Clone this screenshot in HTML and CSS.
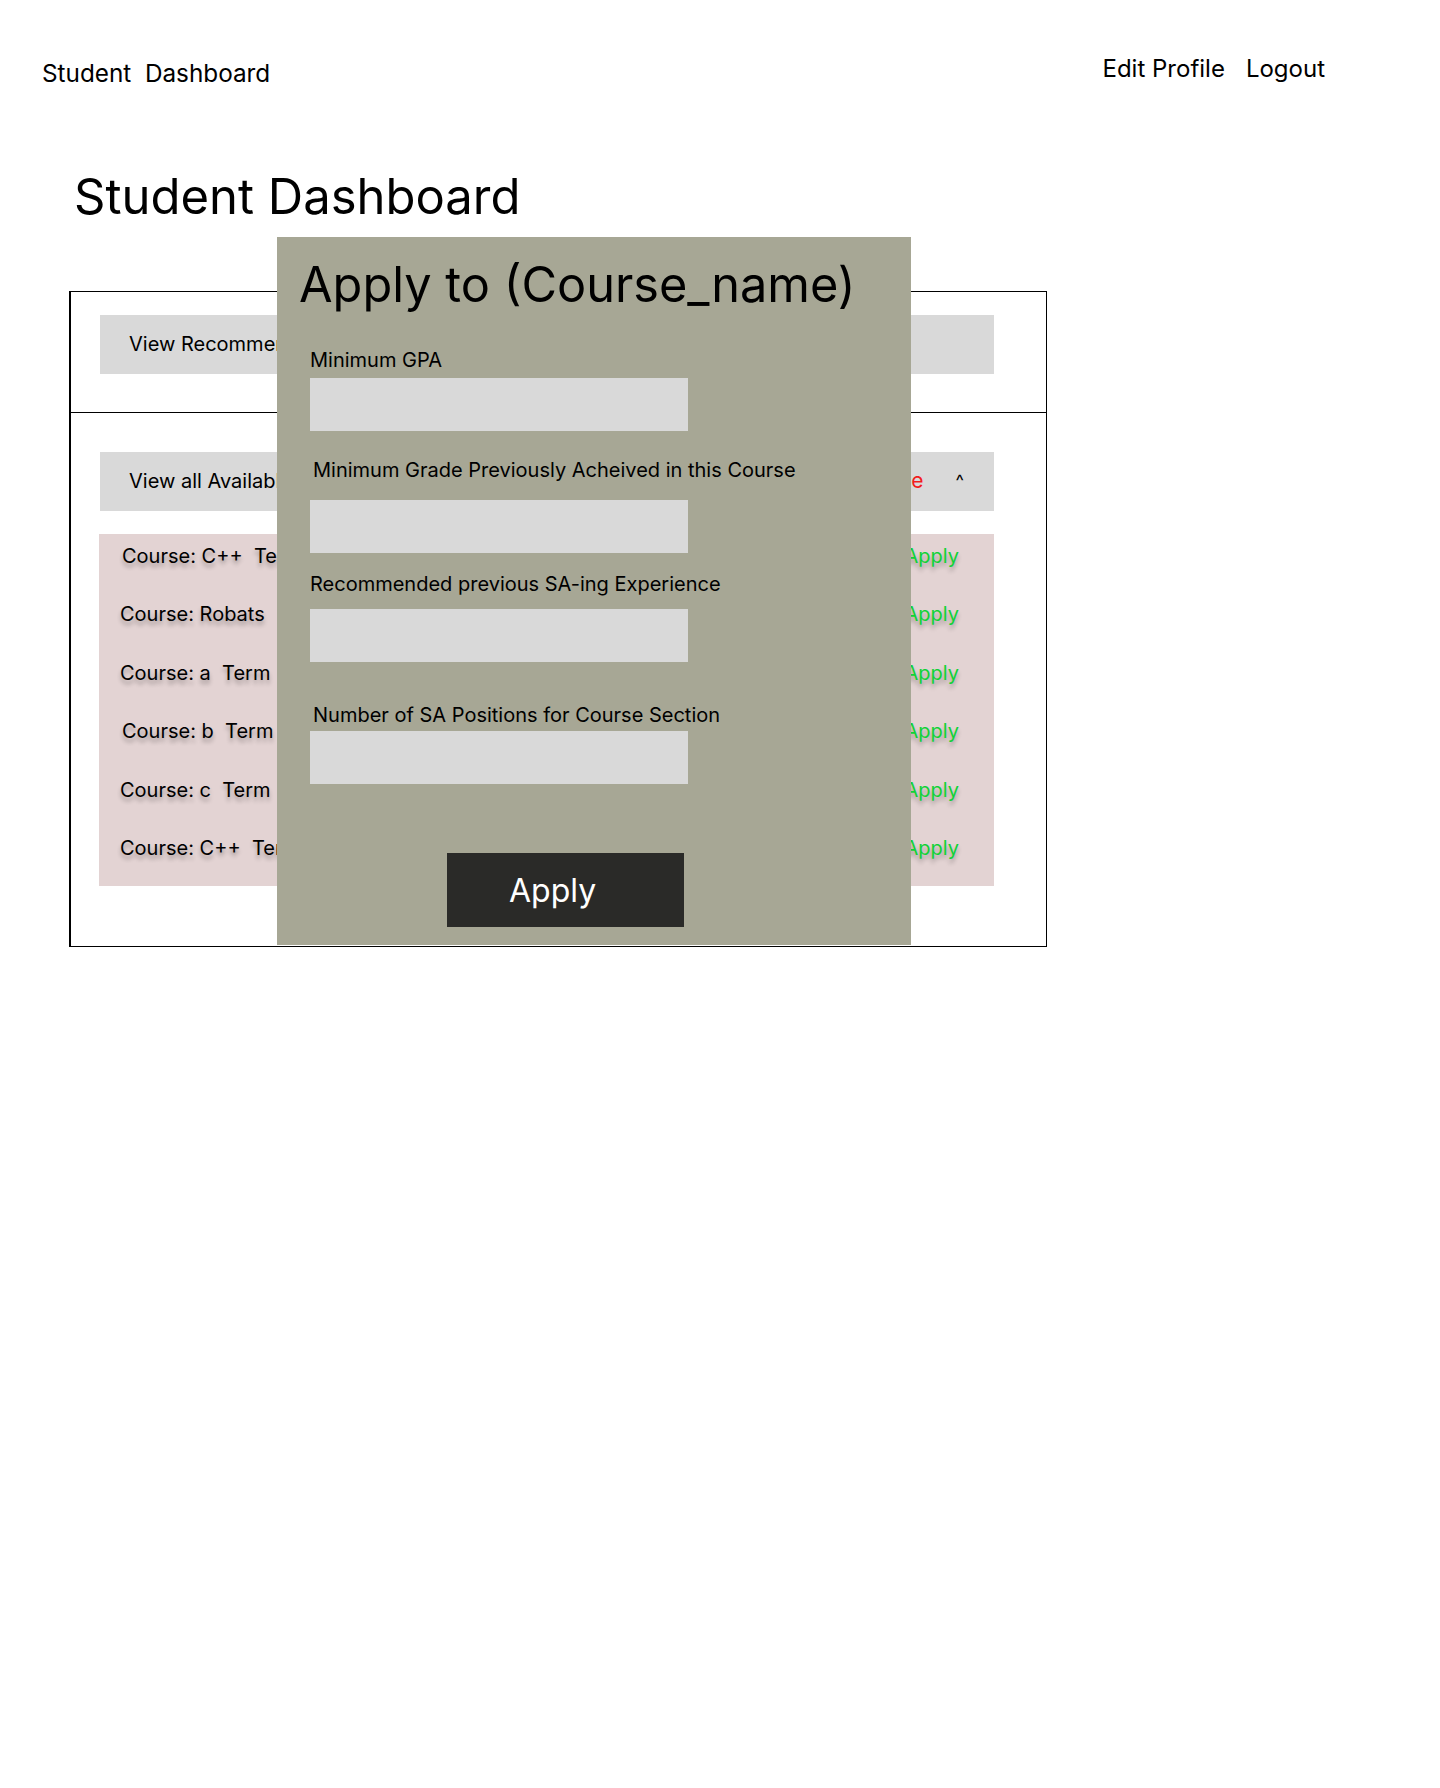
FILE: index.html
```html
<!DOCTYPE html>
<html lang="en">
<head>
<meta charset="utf-8">
<title>Student Dashboard</title>
<link rel="stylesheet" href="styles.css">
</head>
<body>
<div class="page">
  <header class="topbar">
    <div class="brand">Student  Dashboard</div>
    <nav class="nav">
      <a class="nav-link" href="#">Edit Profile</a>
      <a class="nav-link" href="#">Logout</a>
    </nav>
  </header>

  <h1 class="page-title">Student Dashboard</h1>

  <section class="panel">
    <div class="panel-section panel-section--top">
      <div class="bar">
        <span class="bar-label">View Recommended Courses</span>
      </div>
    </div>
    <div class="panel-section panel-section--bottom">
      <div class="bar">
        <span class="bar-label">View all Available Courses</span>
        <span class="bar-spacer"></span>
        <span class="bar-hide">Hide</span>
        <span class="bar-caret">^</span>
      </div>
      <ul class="course-list">
        <li class="course-row course-row--shift"><span class="course-name">Course: C++  Term  Fall</span><span class="course-apply">Apply</span></li>
        <li class="course-row"><span class="course-name">Course: Robats    Term  Fall</span><span class="course-apply">Apply</span></li>
        <li class="course-row"><span class="course-name">Course: a  Term   Fall</span><span class="course-apply">Apply</span></li>
        <li class="course-row course-row--shift"><span class="course-name">Course: b  Term   Fall</span><span class="course-apply">Apply</span></li>
        <li class="course-row"><span class="course-name">Course: c  Term   Fall</span><span class="course-apply">Apply</span></li>
        <li class="course-row"><span class="course-name">Course: C++  Term  Spring</span><span class="course-apply">Apply</span></li>
      </ul>
    </div>
  </section>

  <div class="modal">
    <h2 class="modal-title">Apply to (Course_name)</h2>
    <label class="field-label field-label--gpa">Minimum GPA</label>
    <div class="field-input field-input--gpa"></div>
    <label class="field-label field-label--grade">Minimum Grade Previously Acheived in this Course</label>
    <div class="field-input field-input--grade"></div>
    <label class="field-label field-label--exp">Recommended previous SA-ing Experience</label>
    <div class="field-input field-input--exp"></div>
    <label class="field-label field-label--num">Number of SA Positions for Course Section</label>
    <div class="field-input field-input--num"></div>
    <button class="apply-btn" type="button">Apply</button>
  </div>
</div>
</body>
</html>
```
FILE: styles.css
```css
* { box-sizing: border-box; }

html, body {
  margin: 0;
  padding: 0;
  background: #ffffff;
}

body {
  font-family: Inter, "Noto Sans", "Liberation Sans", sans-serif;
  color: #000;
}

.page {
  position: relative;
  width: 1440px;
  min-height: 1788px;
}

/* header */
.topbar {
  display: flex;
  justify-content: space-between;
  align-items: flex-start;
  padding: 0 115px 0 42px;
}

.brand {
  margin-top: 59px;
  font-size: 24.3px;
  line-height: 29px;
  white-space: pre;
}

.nav {
  display: flex;
  gap: 21px;
  margin-top: 54px;
}

.nav-link {
  font-size: 24px;
  line-height: 29px;
  color: #000;
  text-decoration: none;
}

.page-title {
  margin: 79px 0 0 74px;
  font-size: 49px;
  line-height: 59px;
  font-weight: 400;
}

/* panel */
.panel {
  margin: 65px 0 0 69px;
  width: 978px;
  height: 656px;
  border: 1px solid #000;
  border-left-width: 2px;
}

.panel-section--top {
  padding: 23px 52px 0 29px;
  height: 121px;
  border-bottom: 1px solid #000;
}

.panel-section--bottom {
  padding: 39px 52px 0 29px;
}

.bar {
  display: flex;
  align-items: flex-start;
  height: 59px;
  padding: 17px 30px 0 29px;
  background: #d9d9d9;
  font-size: 20px;
  line-height: 24px;
}

.bar-spacer { flex: 1; }

.bar-hide {
  color: #f21d1d;
  font-size: 21px;
}

.bar-caret {
  margin-left: 32px;
  font-size: 18px;
}

.course-list {
  list-style: none;
  margin: 23px 0 0 -1px;
  padding: 10px 35px 0 21px;
  height: 352px;
  background: #e3d3d3;
}

.course-row {
  display: flex;
  justify-content: space-between;
  height: 58.4px;
  font-size: 20px;
  line-height: 24px;
  text-shadow: 0 4px 4px rgba(0, 0, 0, 0.3);
}

.course-row--shift .course-name {
  padding-left: 2px;
}

.course-name {
  white-space: pre;
}

.course-apply {
  color: #10d236;
}

/* modal overlay */
.modal {
  position: absolute;
  left: 277px;
  top: 237px;
  width: 634px;
  height: 708px;
  background: #a7a795;
  padding: 19px 0 0 33px;
  display: flex;
  flex-direction: column;
  align-items: flex-start;
  z-index: 10;
}

.modal-title {
  margin: 0 0 0 -11px;
  font-size: 48.7px;
  line-height: 58px;
  font-weight: 400;
}

.field-label {
  display: block;
  font-size: 20px;
  line-height: 24px;
}

.field-label--gpa { margin-top: 34px; }
.field-label--grade { margin-top: 27px; margin-left: 3px; }
.field-label--exp { margin-top: 19px; }
.field-label--num { margin-top: 41px; margin-left: 3px; }

.field-input {
  width: 378px;
  height: 53px;
  background: #d9d9d9;
}

.field-input--gpa { margin-top: 6px; }
.field-input--grade { margin-top: 18px; }
.field-input--exp { margin-top: 13px; }
.field-input--num { margin-top: 4px; }

.apply-btn {
  margin: 69px 0 0 137px;
  width: 237px;
  height: 74px;
  border: 0;
  background: #2a2a28;
  color: #fff;
  font-family: Inter, "Noto Sans", "Liberation Sans", sans-serif;
  font-size: 32px;
  line-height: 39px;
  text-align: left;
  padding: 0 0 0 62px;
  display: flex;
  align-items: center;
}
```
